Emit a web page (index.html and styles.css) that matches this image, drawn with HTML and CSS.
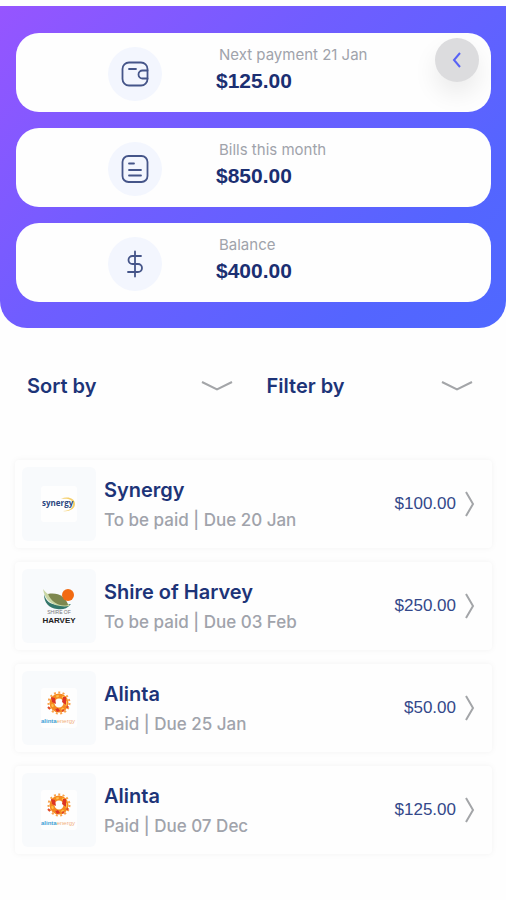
FILE: index.html
```html
<!DOCTYPE html>
<html lang="en">
<head>
<meta charset="utf-8">
<meta name="viewport" content="width=device-width, initial-scale=1">
<title>Bills</title>
<link rel="stylesheet" href="styles.css">
</head>
<body>
<svg width="0" height="0" class="defs" aria-hidden="true">
  <symbol id="down" viewBox="0 0 32 10"><path d="M1 1 L16 8.5 L31 1"/></symbol>
  <symbol id="next" viewBox="0 0 10 26"><path d="M1 1 L8 13 L1 25"/></symbol>
  <symbol id="alinta" viewBox="0 0 36 40">
    <circle cx="18" cy="15" r="7" fill="none" stroke="#f58a1f" stroke-width="5"/>
    <circle cx="18" cy="15" r="10.5" fill="none" stroke="#f9a24b" stroke-width="2" stroke-dasharray="2 2.4"/>
    <circle cx="18" cy="15" r="7" fill="none" stroke="#ffc24d" stroke-width="2" stroke-dasharray="2.5 3.5"/>
    <path d="M10 9l4 1 1 6-4-2zM22 9l3 0 0 8-4-3zM14 21l3-1 2 3-3 1z" fill="#dc3526"/>
    <path d="M7 19l2 2M26 20l1-2M21 23l2-1" stroke="#df4a2a" stroke-width="2"/>
  </symbol>
</svg>

<header class="hero">
  <button class="back" type="button" aria-label="Back">
    <svg width="10" height="16" viewBox="0 0 10 16"><path d="M8 1 L2 8 L8 15"/></svg>
  </button>
  <section class="stat">
    <span class="stat-icon">
      <svg width="28" height="28" viewBox="0 0 28 28"><rect x="1.5" y="2.5" width="25" height="23" rx="6.5"/><path d="M8 9h7M26.5 10.5h-5a4 4 0 0 0 0 8h5"/></svg>
    </span>
    <div><p class="stat-label">Next payment 21 Jan</p><p class="stat-value">$125.00</p></div>
  </section>
  <section class="stat">
    <span class="stat-icon">
      <svg width="28" height="28" viewBox="0 0 28 28"><rect x="1.5" y="1" width="25" height="26" rx="6"/><path d="M8 8.5h5M8 15h12M8 20.500h12"/></svg>
    </span>
    <div><p class="stat-label">Bills this month</p><p class="stat-value">$850.00</p></div>
  </section>
  <section class="stat">
    <span class="stat-icon">
      <svg width="28" height="28" viewBox="0 0 28 28"><path d="M14 1.500v25M20 6h-8.500a4 4 0 0 0 0 8h5.500a4 4 0 0 1 0 8h-10"/></svg>
    </span>
    <div><p class="stat-label">Balance</p><p class="stat-value">$400.00</p></div>
  </section>
</header>

<main>
  <form class="controls">
    <div class="control">
      <select aria-label="Sort by"><option>Sort by</option><option>Due date</option><option>Amount</option></select>
      <svg class="down"><use href="#down"/></svg>
    </div>
    <div class="control">
      <select aria-label="Filter by"><option>Filter by</option><option>To be paid</option><option>Paid</option></select>
      <svg class="down"><use href="#down"/></svg>
    </div>
  </form>

  <ul class="bills">
    <li><a class="bill" href="#synergy">
      <span class="thumb">
        <svg class="boxed" width="36" height="36" viewBox="0 0 36 36"><path d="M20 13c6-3 14-1 14 5 0 5-6 8-12 7 6 0 10-3 10-7 0-5-6-6-12-5z" fill="#f5cf6b"/><text x="1" y="20" class="synergy-text">synergy</text></svg>
      </span>
      <span class="info"><span class="name">Synergy</span><span class="meta">To be paid | Due 20 Jan</span></span>
      <span class="amount">$100.00</span><svg class="next"><use href="#next"/></svg>
    </a></li>
    <li><a class="bill" href="#harvey">
      <span class="thumb">
        <svg width="36" height="40" viewBox="0 0 36 40">
          <path d="M3 8c2 8 7 10 13 11 6 0 10 0 14-1-4 5-9 6-14 5C8 22 3 17 3 8z" fill="#34776b"/>
          <path d="M2 3c4 5 8 8 14 9 6 2 10 4 13 8C14 22 4 16 2 3z" fill="#c9d6a4"/>
          <path d="M7 8c10-2 18 3 20 11-8 2-16-2-20-11z" fill="#7d874f"/>
          <circle cx="27" cy="9" r="6" fill="#f26a12"/>
          <text x="18" y="28" class="shire-text">SHIRE OF</text>
          <text x="18" y="37" class="harvey-text">HARVEY</text>
        </svg>
      </span>
      <span class="info"><span class="name">Shire of Harvey</span><span class="meta">To be paid | Due 03 Feb</span></span>
      <span class="amount">$250.00</span><svg class="next"><use href="#next"/></svg>
    </a></li>
    <li><a class="bill" href="#alinta-jan">
      <span class="thumb"><svg class="boxed" width="36" height="40"><use href="#alinta"/><text x="0" y="35" class="alinta-text">alinta<tspan class="alinta-light">energy</tspan></text></svg></span>
      <span class="info"><span class="name">Alinta</span><span class="meta">Paid | Due 25 Jan</span></span>
      <span class="amount">$50.00</span><svg class="next"><use href="#next"/></svg>
    </a></li>
    <li><a class="bill" href="#alinta-dec">
      <span class="thumb"><svg class="boxed" width="36" height="40"><use href="#alinta"/><text x="0" y="35" class="alinta-text">alinta<tspan class="alinta-light">energy</tspan></text></svg></span>
      <span class="info"><span class="name">Alinta</span><span class="meta">Paid | Due 07 Dec</span></span>
      <span class="amount">$125.00</span><svg class="next"><use href="#next"/></svg>
    </a></li>
  </ul>
</main>
</body>
</html>
```
FILE: styles.css
```css
* { box-sizing: border-box; }
body {
  margin: 0;
  padding-top: 6px;
  background: #fefefe;
  color: #1d3478;
  font-family: Inter, "Liberation Sans", sans-serif;
}
p, ul { margin: 0; padding: 0; }
.defs { position: absolute; }

.hero {
  position: relative;
  display: flex;
  flex-direction: column;
  gap: 16px;
  padding: 27px 15px 26px 16px;
  border-radius: 0 0 27px 27px;
  background: linear-gradient(135deg, #9655ff 0%, #705dff 40%, #5465ff 80%, #4f68ff 100%);
}
.back {
  position: absolute;
  top: 32px;
  right: 27px;
  display: grid;
  place-items: center;
  width: 44px;
  height: 44px;
  padding: 0;
  border: 0;
  border-radius: 50%;
  background: #dcdcde;
  box-shadow: 0 12px 24px rgba(0, 0, 0, 0.08);
}
.back svg { fill: none; stroke: #5862f5; stroke-width: 2; }

.stat {
  display: grid;
  grid-template-columns: 200px 1fr;
  height: 79px;
  border-radius: 23px;
  background: #fefefe;
}
.stat-icon {
  display: grid;
  place-items: center;
  width: 54px;
  height: 54px;
  margin: 14px 0 0 92px;
  border-radius: 50%;
  background: #f3f6fe;
}
.stat-icon svg {
  fill: none;
  stroke: #455589;
  stroke-width: 1.8;
  stroke-linecap: round;
}
.stat-label {
  padding: 12px 0 0 3px;
  color: #a0a3ab;
  font-size: 15px;
  line-height: 20px;
}
.stat-value {
  color: #1b2f72;
  font: bold 21px/32px "Liberation Sans", sans-serif;
}

.controls {
  display: grid;
  grid-template-columns: 1fr 1fr;
  padding: 38px 26px 0 27px;
}
.control { display: grid; align-items: center; }
.control:first-child { padding-right: 14px; }
.control:last-child { padding-left: 13px; }
.control > * { grid-area: 1 / 1; }
.control select {
  width: 100%;
  height: 40px;
  padding: 0;
  border: 0;
  appearance: none;
  background: none;
  color: #1d3478;
  font: 600 20px/40px Inter, sans-serif;
}
.down {
  justify-self: end;
  width: 32px;
  height: 10px;
  margin-right: 7px;
  pointer-events: none;
}
.down, .next { fill: none; stroke: #a3a5a8; stroke-width: 2; }

.bills {
  display: grid;
  gap: 14px;
  padding: 54px 14px 24px 15px;
  list-style: none;
}
.bill {
  display: flex;
  align-items: center;
  height: 88px;
  padding: 0 17px 0 7px;
  border-radius: 4px;
  background: #fefefe;
  box-shadow: 0 0 6px rgba(0, 0, 0, 0.05);
  color: inherit;
  text-decoration: none;
}
.thumb {
  display: grid;
  place-items: center;
  width: 74px;
  height: 74px;
  border-radius: 6px;
  background: #f8fafc;
}
.boxed { border-radius: 3px; background: #fefefe; }
.info {
  display: flex;
  flex: 1;
  flex-direction: column;
  padding-left: 8px;
}
.name { font-size: 20px; font-weight: 600; line-height: 32px; }
.meta { color: #a0a3ab; font-size: 17px; font-weight: 500; line-height: 28px; }
.amount {
  color: #34488a;
  font: 17px/24px "Liberation Sans", sans-serif;
}
.next { width: 10px; height: 26px; margin-left: 9px; }

.synergy-text { fill: #2b477f; font: bold 8px "Open Sans", sans-serif; }
.shire-text { fill: #777; font: 5px "Liberation Sans", sans-serif; text-anchor: middle; }
.harvey-text { fill: #222; font: bold 8px "Liberation Sans", sans-serif; text-anchor: middle; }
.alinta-text { fill: #3f9fd6; font: bold 6px "Liberation Sans", sans-serif; }
.alinta-light { fill: #f2b07c; font-weight: normal; }
```
